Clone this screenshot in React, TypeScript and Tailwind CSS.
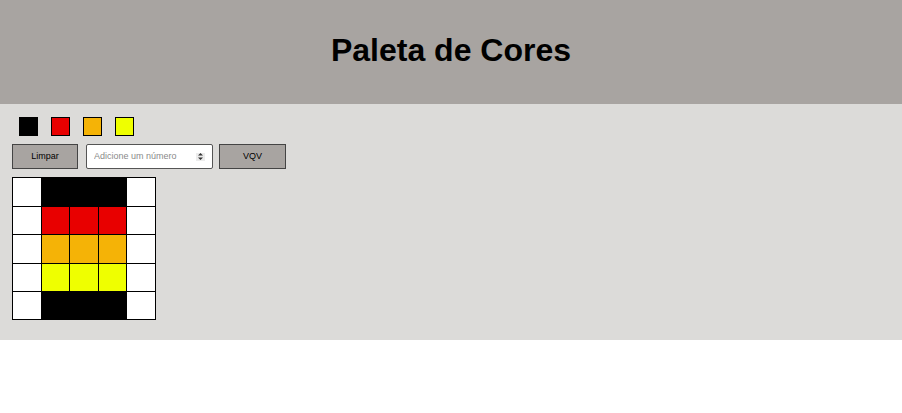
import React from 'react';

const palette = ['bg-black', 'bg-[#e80000]', 'bg-[#f5b306]', 'bg-[#efff00]'];

const rows = [
  ['bg-white', 'bg-black', 'bg-black', 'bg-black', 'bg-white'],
  ['bg-white', 'bg-[#e80000]', 'bg-[#e80000]', 'bg-[#e80000]', 'bg-white'],
  ['bg-white', 'bg-[#f5b306]', 'bg-[#f5b306]', 'bg-[#f5b306]', 'bg-white'],
  ['bg-white', 'bg-[#efff00]', 'bg-[#efff00]', 'bg-[#efff00]', 'bg-white'],
  ['bg-white', 'bg-black', 'bg-black', 'bg-black', 'bg-white'],
];

export default function App() {
  return (
    <div className="min-h-screen bg-white font-['Liberation_Sans',Arial,sans-serif] text-black">
      <header className="h-[104px] bg-[#a8a4a1] flex items-center justify-center">
        <h1 className="text-[32px] font-bold leading-none pb-1">Paleta de Cores</h1>
      </header>

      <main className="bg-[#dcdbd9] pt-[13px] pb-[20px] px-3">
        <div className="flex gap-[13px] pl-[7px]">
          {palette.map((color, i) => (
            <div key={i} className={`w-[19px] h-[19px] border border-black ${color}`} />
          ))}
        </div>

        <div className="flex items-center mt-2">
          <button className="w-[66px] h-[25px] bg-[#a8a4a1] border border-[#444] text-[9px]">
            Limpar
          </button>
          <div className="ml-2 w-[127px] h-[25px] bg-white border border-[#555] rounded-[2px] flex items-center pl-[7px] pr-[7px]">
            <input
              type="text"
              placeholder="Adicione um número"
              className="flex-1 min-w-0 bg-transparent outline-none text-[9px] placeholder:text-[#8a8a8a]"
            />
            <span className="w-[9px] h-[8px] bg-[#ececec] flex items-center justify-center">
              <svg width="5" height="7" viewBox="0 0 5 7">
                <path d="M2.5 0 L5 2.6 L0 2.6 Z M2.5 7 L5 4.4 L0 4.4 Z" fill="#333" />
              </svg>
            </span>
          </div>
          <button className="ml-[6px] w-[67px] h-[25px] bg-[#a8a4a1] border border-[#444] text-[9px]">
            VQV
          </button>
        </div>

        <div className="mt-2 inline-grid grid-cols-[28px_27px_28px_27px_28px] grid-rows-[28px_27px_28px_27px_27px] gap-px bg-black border border-black">
          {rows.flat().map((color, i) => (
            <div key={i} className={color} />
          ))}
        </div>
      </main>
    </div>
  );
}
